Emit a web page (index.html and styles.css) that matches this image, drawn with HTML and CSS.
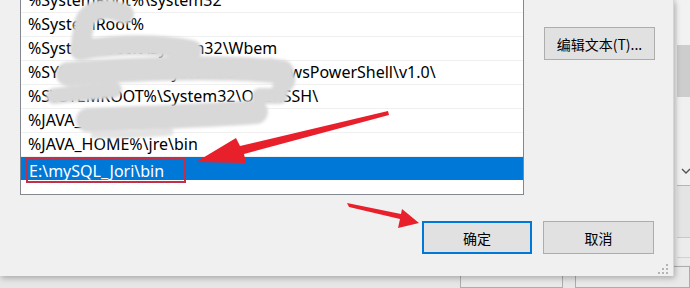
FILE: index.html
```html
<!DOCTYPE html>
<html lang="zh-CN">
<head>
  <meta charset="UTF-8" />
  <title>编辑环境变量</title>
  <link rel="stylesheet" href="styles.css">
</head>
<body>
  <div class="desktop">
    <div class="back-window">
      <div class="back-side">
        <div class="seg seg-top"></div>
        <div class="seg seg-thumb"></div>
        <div class="seg seg-mid">
          <svg class="chev" width="10" height="8" viewBox="0 0 10 8"><path d="M1 2 L5 6 L9 2" /></svg>
        </div>
        <div class="seg seg-band"></div>
        <div class="seg seg-low"></div>
        <div class="seg seg-rest"></div>
      </div>
      <div class="back-bottom">
        <div class="back-btn b1"></div>
        <div class="back-btn b2"></div>
      </div>
    </div>

    <div class="dialog">
      <div class="dialog-body">
        <ul class="path-list">
          <li>%SystemRoot%\system32</li>
          <li>%SystemRoot%</li>
          <li>%SystemRoot%\System32\Wbem</li>
          <li>%SYSTEMROOT%\System32\WindowsPowerShell\v1.0\</li>
          <li>%SYSTEMROOT%\System32\OpenSSH\</li>
          <li>%JAVA_HOME%\bin</li>
          <li>%JAVA_HOME%\jre\bin</li>
          <li class="selected"><span class="mark">E:\mySQL_Jori\bin</span></li>
        </ul>
        <div class="side-buttons">
          <button class="btn">编辑文本(T)...</button>
        </div>
      </div>
      <div class="dialog-footer">
        <button class="btn btn-ok">确定</button>
        <button class="btn">取消</button>
      </div>
      <div class="grip-row">
        <svg class="grip" width="12" height="12" viewBox="0 0 12 12">
          <rect x="9" y="1" width="2" height="2" />
          <rect x="5" y="5" width="2" height="2" />
          <rect x="9" y="5" width="2" height="2" />
          <rect x="1" y="9" width="2" height="2" />
          <rect x="5" y="9" width="2" height="2" />
          <rect x="9" y="9" width="2" height="2" />
        </svg>
      </div>
    </div>

    <!-- hand-drawn marks over the screenshot -->
    <svg class="annot" width="690" height="288" viewBox="0 0 690 288">
      <defs>
        <filter id="soft" x="-20%" y="-40%" width="140%" height="180%">
          <feGaussianBlur stdDeviation="1.6" />
        </filter>
      </defs>
      <g class="scribble" filter="url(#soft)">
        <path d="M124 14 C 108 6, 88 8, 84 24 L 80 50" />
        <path d="M80 50 C 120 44, 160 44, 192 50" />
        <path class="wide" d="M68 74 C 140 68, 230 66, 282 72" />
        <path class="thin" d="M270 66 C 290 72, 292 82, 280 88" />
        <path class="thin" d="M54 96 C 75 94, 95 92, 114 90" />
        <path class="thin" d="M260 96 L 280 96" />
        <path class="wide" d="M88 120 C 140 118, 200 116, 256 112" />
        <path class="hair" d="M94 135 C 120 135, 150 134, 170 132" />
      </g>
      <g class="arrow">
        <polygon points="388,111 389,115 244,154 246,163 196,162 236,138 240,146" />
        <polygon points="347,203 349,207 400,219 398,228 419,223 402,209 401,214" />
      </g>
    </svg>
  </div>
</body>
</html>
```

FILE: styles.css
```css
body {
  margin: 0;
  padding: 0;
  background: #ececec;
  font-family: "Noto Sans", "Noto Sans CJK SC", sans-serif;
  color: #000;
}
.desktop {
  position: relative;
  width: 690px;
  height: 288px;
  overflow: hidden;
}
.back-window {
  display: flex;
  flex-direction: column;
  height: 100%;
}
.back-side {
  margin-left: 677px;
  height: 278px;
  display: flex;
  flex-direction: column;
  background: #f0f0f0;
}
.seg-top {
  height: 45px;
  background: #f2f2f2;
}
.seg-thumb {
  height: 52px;
  background: #cdcdcd;
}
.seg-mid {
  height: 88px;
  background: #f0f0f0;
}
.chev {
  display: block;
  margin: 70px 0 0 4px;
}
.chev path {
  fill: none;
  stroke: #555;
  stroke-width: 1.4px;
}
.seg-band {
  height: 51px;
  background: #e4e4e4;
  border-top: 1px solid #b6b6b6;
  border-bottom: 1px solid #c8c8c8;
}
.seg-low {
  height: 19px;
  background: #ececec;
  border-bottom: 1px solid #d2d2d2;
}
.seg-rest {
  flex: 1;
  background: #ebebeb;
}
.back-bottom {
  display: flex;
  gap: 12px;
  padding-left: 460px;
  background: #e6e6e6;
  flex: 1;
  padding-top: 1px;
}
.back-btn {
  height: 20px;
  background: #e9e9e9;
  border: 1px solid #adadad;
}
.b1 {
  width: 108px;
}
.b2 {
  width: 120px;
}

.dialog {
  position: absolute;
  left: 0;
  top: 0;
  width: 673px;
  height: 276px;
  background: #f0f0f0;
  border-right: 1px solid #d6d6d6;
  box-shadow: 1px 2px 6px rgba(0,0,0,0.28);
  display: flex;
  flex-direction: column;
}
.dialog-body {
  display: flex;
  padding-left: 20px;
}
.path-list {
  list-style: none;
  margin: -13px 0 0 0;
  padding: 0;
  width: 504px;
  height: 208px;
  box-sizing: border-box;
  background: #fff;
  border: 1px solid #828790;
}
.path-list li {
  height: 24px;
  line-height: 23px;
  padding-left: 7px;
  font-size: 16px;
  border-top: 1px solid #f0f0f0;
  box-sizing: border-box;
  white-space: nowrap;
}
.path-list li:first-child {
  border-top: none;
  line-height: 24px;
}
.path-list li.selected {
  background: #0078d7;
  color: #fff;
}
.mark {
  display: inline-block;
  margin-left: -2px;
  padding: 0 20px 0 1px;
  height: 25px;
  line-height: 22px;
  box-sizing: border-box;
  border: 2px solid #c0304a;
  vertical-align: top;
  margin-top: 1px;
}
.side-buttons {
  margin: 27px 0 0 20px;
}
.btn {
  width: 111px;
  height: 33px;
  box-sizing: border-box;
  background: #e1e1e1;
  border: 1px solid #adadad;
  font-family: "Noto Sans CJK SC", "Noto Sans", sans-serif;
  font-size: 14px;
  color: #000;
  padding: 0;
}
.btn-ok {
  width: 110px;
  border: 2px solid #0078d7;
}
.dialog-footer {
  display: flex;
  justify-content: flex-end;
  gap: 11px;
  margin-top: 26px;
  padding-right: 19px;
}
.grip-row {
  display: flex;
  justify-content: flex-end;
  padding-right: 4px;
  margin-top: 9px;
}
.grip rect {
  fill: #b4b4b4;
}

.annot {
  position: absolute;
  left: 0;
  top: 0;
  pointer-events: none;
}
.scribble path {
  fill: none;
  stroke: #d8d8d8;
  stroke-width: 20px;
  stroke-linecap: round;
}
.scribble .wide {
  stroke-width: 24px;
}
.scribble .thin {
  stroke-width: 16px;
}
.scribble .hair {
  stroke-width: 7px;
  stroke: #e2e2e2;
}
.arrow polygon {
  fill: #e8202c;
}
```
